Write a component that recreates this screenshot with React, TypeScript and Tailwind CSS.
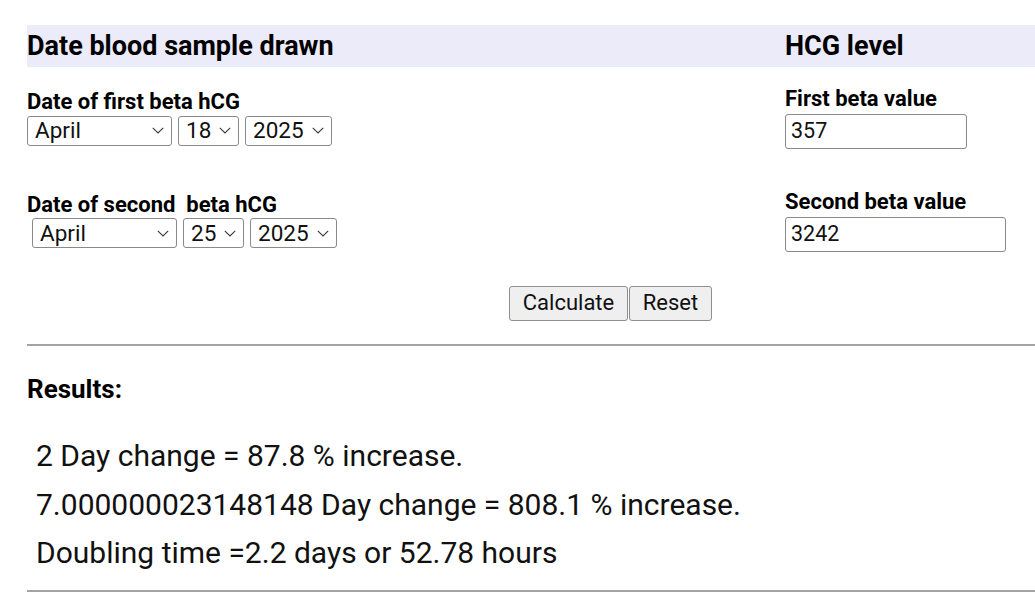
import React from 'react';

const Chevron = () => (
  <svg width="12" height="7" viewBox="0 0 12 7" className="shrink-0" aria-hidden>
    <path d="M0.8 0.8 L6 6 L11.2 0.8" fill="none" stroke="#3a3a3a" strokeWidth="1.1" />
  </svg>
);

const FakeSelect: React.FC<{ value: string; width: string }> = ({ value, width }) => (
  <div
    className={`flex items-center justify-between h-[30px] ${width} pl-[7px] pr-[7px] border border-[#8a8a8a] rounded-[3px] bg-white text-[22.5px] leading-none text-[#111]`}
  >
    <span>{value}</span>
    <Chevron />
  </div>
);

const TextBox: React.FC<{ value: string; width: string }> = ({ value, width }) => (
  <div
    className={`flex items-center h-[35px] ${width} px-[5px] border border-[#8a8a8a] rounded-[3px] bg-white text-[21.5px] leading-none text-[#111]`}
  >
    {value}
  </div>
);

const Btn: React.FC<{ label: string; width: string }> = ({ label, width }) => (
  <button
    type="button"
    className={`h-[35px] ${width} border border-[#8f8f8f] rounded-[3px] bg-[#efefef] text-[22px] leading-none text-[#111]`}
  >
    {label}
  </button>
);

export default function App() {
  return (
    <div className="min-h-[600px] bg-white pt-[25px] pl-[27px] text-black" style={{ fontFamily: 'Roboto, "Noto Sans", sans-serif' }}>
      <div className="grid grid-cols-[758px_1fr] items-center h-[42px] bg-[#ebebfa] text-[27px] font-bold">
        <div>Date blood sample drawn</div>
        <div>HCG level</div>
      </div>

      <div className="grid grid-cols-[758px_1fr] items-center h-[102px]">
        <div className="flex flex-col gap-[3px]">
          <div className="text-[22px] font-bold leading-[22px]">Date of first beta hCG</div>
          <div className="flex gap-[6px]">
            <FakeSelect value="April" width="w-[145px]" />
            <FakeSelect value="18" width="w-[61px]" />
            <FakeSelect value="2025" width="w-[87px]" />
          </div>
        </div>
        <div className="flex flex-col gap-[4px]">
          <div className="text-[22px] font-bold leading-[22px]">First beta value</div>
          <TextBox value="357" width="w-[182px]" />
        </div>
      </div>

      <div className="grid grid-cols-[758px_1fr] items-center h-[104px]">
        <div className="flex flex-col gap-[2px]">
          <div className="text-[22px] font-bold leading-[22px] whitespace-pre">Date of second  beta hCG</div>
          <div className="flex gap-[6px] pl-[5px]">
            <FakeSelect value="April" width="w-[145px]" />
            <FakeSelect value="25" width="w-[61px]" />
            <FakeSelect value="2025" width="w-[87px]" />
          </div>
        </div>
        <div className="flex flex-col gap-[4px]">
          <div className="text-[22px] font-bold leading-[22px]">Second beta value</div>
          <TextBox value="3242" width="w-[221px]" />
        </div>
      </div>

      <div className="flex items-center h-[60px] pl-[482px] gap-[1px]">
        <Btn label="Calculate" width="w-[119px]" />
        <Btn label="Reset" width="w-[83px]" />
      </div>

      <div className="mt-[11px] h-[2px] bg-[#a3a3a3]" />

      <div className="pt-[28px] text-[26px] font-bold leading-[30px]">Results:</div>

      <div className="pt-[37px] pl-[9px] flex flex-col gap-[18.5px] text-[30px] leading-[30px] text-[#111]">
        <div>2 Day change = 87.8 % increase.</div>
        <div>7.000000023148148 Day change = 808.1 % increase.</div>
        <div>Doubling time =2.2 days or 52.78 hours</div>
      </div>

      <div className="mt-[22px] h-[2px] bg-[#a3a3a3]" />
    </div>
  );
}
